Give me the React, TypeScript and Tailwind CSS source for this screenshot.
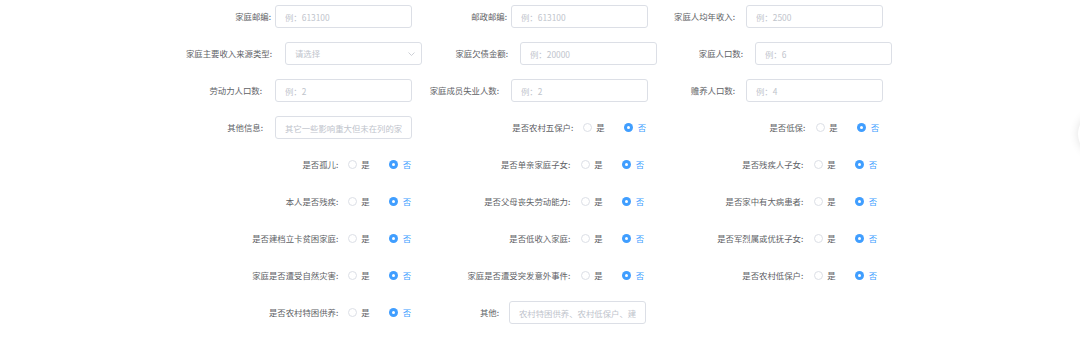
import React from "react";

function TextInput({ placeholder }: { placeholder: string }) {
  return (
    <input
      readOnly
      placeholder={placeholder}
      className="h-[23px] w-[137px] shrink-0 rounded-[3px] border border-[#dcdfe6] bg-white pl-[9px] pr-[9px] text-[8.4px] text-[#606266] outline-none placeholder:text-[#c0c4cc]"
    />
  );
}

function SelectBox() {
  return (
    <div className="flex h-[23px] w-[137px] shrink-0 items-center justify-between rounded-[3px] border border-[#dcdfe6] bg-white pl-[9px] pr-[6px]">
      <span className="text-[#c0c4cc]">请选择</span>
      <svg width="7" height="4" viewBox="0 0 7 4">
        <path d="M0.5 0.5 L3.5 3.5 L6.5 0.5" stroke="#c0c4cc" fill="none" strokeWidth="0.8" />
      </svg>
    </div>
  );
}

function RadioPair() {
  return (
    <div className="flex shrink-0 items-center">
      <span className="h-[9px] w-[9px] rounded-full border border-[#dcdfe6] bg-white" />
      <span className="ml-[4px] text-[#606266]">是</span>
      <span className="ml-[19px] flex h-[9px] w-[9px] items-center justify-center rounded-full bg-[#409eff]">
        <span className="h-[3px] w-[3px] rounded-full bg-white" />
      </span>
      <span className="ml-[5px] text-[#409eff]">否</span>
    </div>
  );
}

function Cell({
  w,
  gap,
  label,
  children,
}: {
  w: string;
  gap: string;
  label: string;
  children: React.ReactNode;
}) {
  return (
    <div className={`flex shrink-0 items-center justify-end ${w}`}>
      <span className={`whitespace-nowrap text-[#606266] ${gap}`}>{label}:</span>
      {children}
    </div>
  );
}

function Row({ children }: { children: React.ReactNode }) {
  return <div className="flex h-[23px] items-center">{children}</div>;
}

export default function App() {
  return (
    <div className="relative h-[337px] w-[1080px] overflow-hidden bg-white font-['Noto_Sans_CJK_SC',sans-serif] text-[8.4px] leading-none">
      <div className="flex flex-col gap-[14px] pt-[5px]">
        <Row>
          <Cell w="w-[412px]" gap="mr-[4px]" label="家庭邮编">
            <TextInput placeholder="例：613100" />
          </Cell>
          <Cell w="w-[236px]" gap="mr-[4px]" label="邮政邮编">
            <TextInput placeholder="例：613100" />
          </Cell>
          <Cell w="w-[235px]" gap="mr-[11px]" label="家庭人均年收入">
            <TextInput placeholder="例：2500" />
          </Cell>
        </Row>
        <Row>
          <Cell w="w-[422px]" gap="mr-[13px]" label="家庭主要收入来源类型">
            <SelectBox />
          </Cell>
          <Cell w="w-[235px]" gap="mr-[12px]" label="家庭欠债金额">
            <TextInput placeholder="例：20000" />
          </Cell>
          <Cell w="w-[235px]" gap="mr-[12px]" label="家庭人口数">
            <TextInput placeholder="例：6" />
          </Cell>
        </Row>
        <Row>
          <Cell w="w-[412px]" gap="mr-[13px]" label="劳动力人口数">
            <TextInput placeholder="例：2" />
          </Cell>
          <Cell w="w-[236px]" gap="mr-[12px]" label="家庭成员失业人数">
            <TextInput placeholder="例：2" />
          </Cell>
          <Cell w="w-[235px]" gap="mr-[11px]" label="赡养人口数">
            <TextInput placeholder="例：4" />
          </Cell>
        </Row>
        <Row>
          <Cell w="w-[412px]" gap="mr-[12px]" label="其他信息">
            <TextInput placeholder="其它一些影响重大但未在列的家庭情况" />
          </Cell>
          <Cell w="w-[234px]" gap="mr-[10px]" label="是否农村五保户">
            <RadioPair />
          </Cell>
          <Cell w="w-[233px]" gap="mr-[11px]" label="是否低保">
            <RadioPair />
          </Cell>
        </Row>
        <Row>
          <Cell w="w-[411px]" gap="mr-[10px]" label="是否孤儿">
            <RadioPair />
          </Cell>
          <Cell w="w-[233px]" gap="mr-[11px]" label="是否单亲家庭子女">
            <RadioPair />
          </Cell>
          <Cell w="w-[233px]" gap="mr-[11px]" label="是否残疾人子女">
            <RadioPair />
          </Cell>
        </Row>
        <Row>
          <Cell w="w-[411px]" gap="mr-[10px]" label="本人是否残疾">
            <RadioPair />
          </Cell>
          <Cell w="w-[233px]" gap="mr-[11px]" label="是否父母丧失劳动能力">
            <RadioPair />
          </Cell>
          <Cell w="w-[233px]" gap="mr-[11px]" label="是否家中有大病患者">
            <RadioPair />
          </Cell>
        </Row>
        <Row>
          <Cell w="w-[411px]" gap="mr-[10px]" label="是否建档立卡贫困家庭">
            <RadioPair />
          </Cell>
          <Cell w="w-[233px]" gap="mr-[11px]" label="是否低收入家庭">
            <RadioPair />
          </Cell>
          <Cell w="w-[233px]" gap="mr-[11px]" label="是否军烈属或优抚子女">
            <RadioPair />
          </Cell>
        </Row>
        <Row>
          <Cell w="w-[411px]" gap="mr-[10px]" label="家庭是否遭受自然灾害">
            <RadioPair />
          </Cell>
          <Cell w="w-[233px]" gap="mr-[11px]" label="家庭是否遭受突发意外事件">
            <RadioPair />
          </Cell>
          <Cell w="w-[233px]" gap="mr-[11px]" label="是否农村低保户">
            <RadioPair />
          </Cell>
        </Row>
        <Row>
          <Cell w="w-[411px]" gap="mr-[10px]" label="是否农村特困供养">
            <RadioPair />
          </Cell>
          <Cell w="w-[235px]" gap="mr-[10px]" label="其他">
            <TextInput placeholder="农村特困供养、农村低保户、建档立卡贫困户等" />
          </Cell>
        </Row>
      </div>
      <div className="absolute left-[1078px] top-[112px] h-[44px] w-[44px] rounded-full bg-white shadow-[0_0_10px_rgba(0,0,0,0.12)]" />
    </div>
  );
}
